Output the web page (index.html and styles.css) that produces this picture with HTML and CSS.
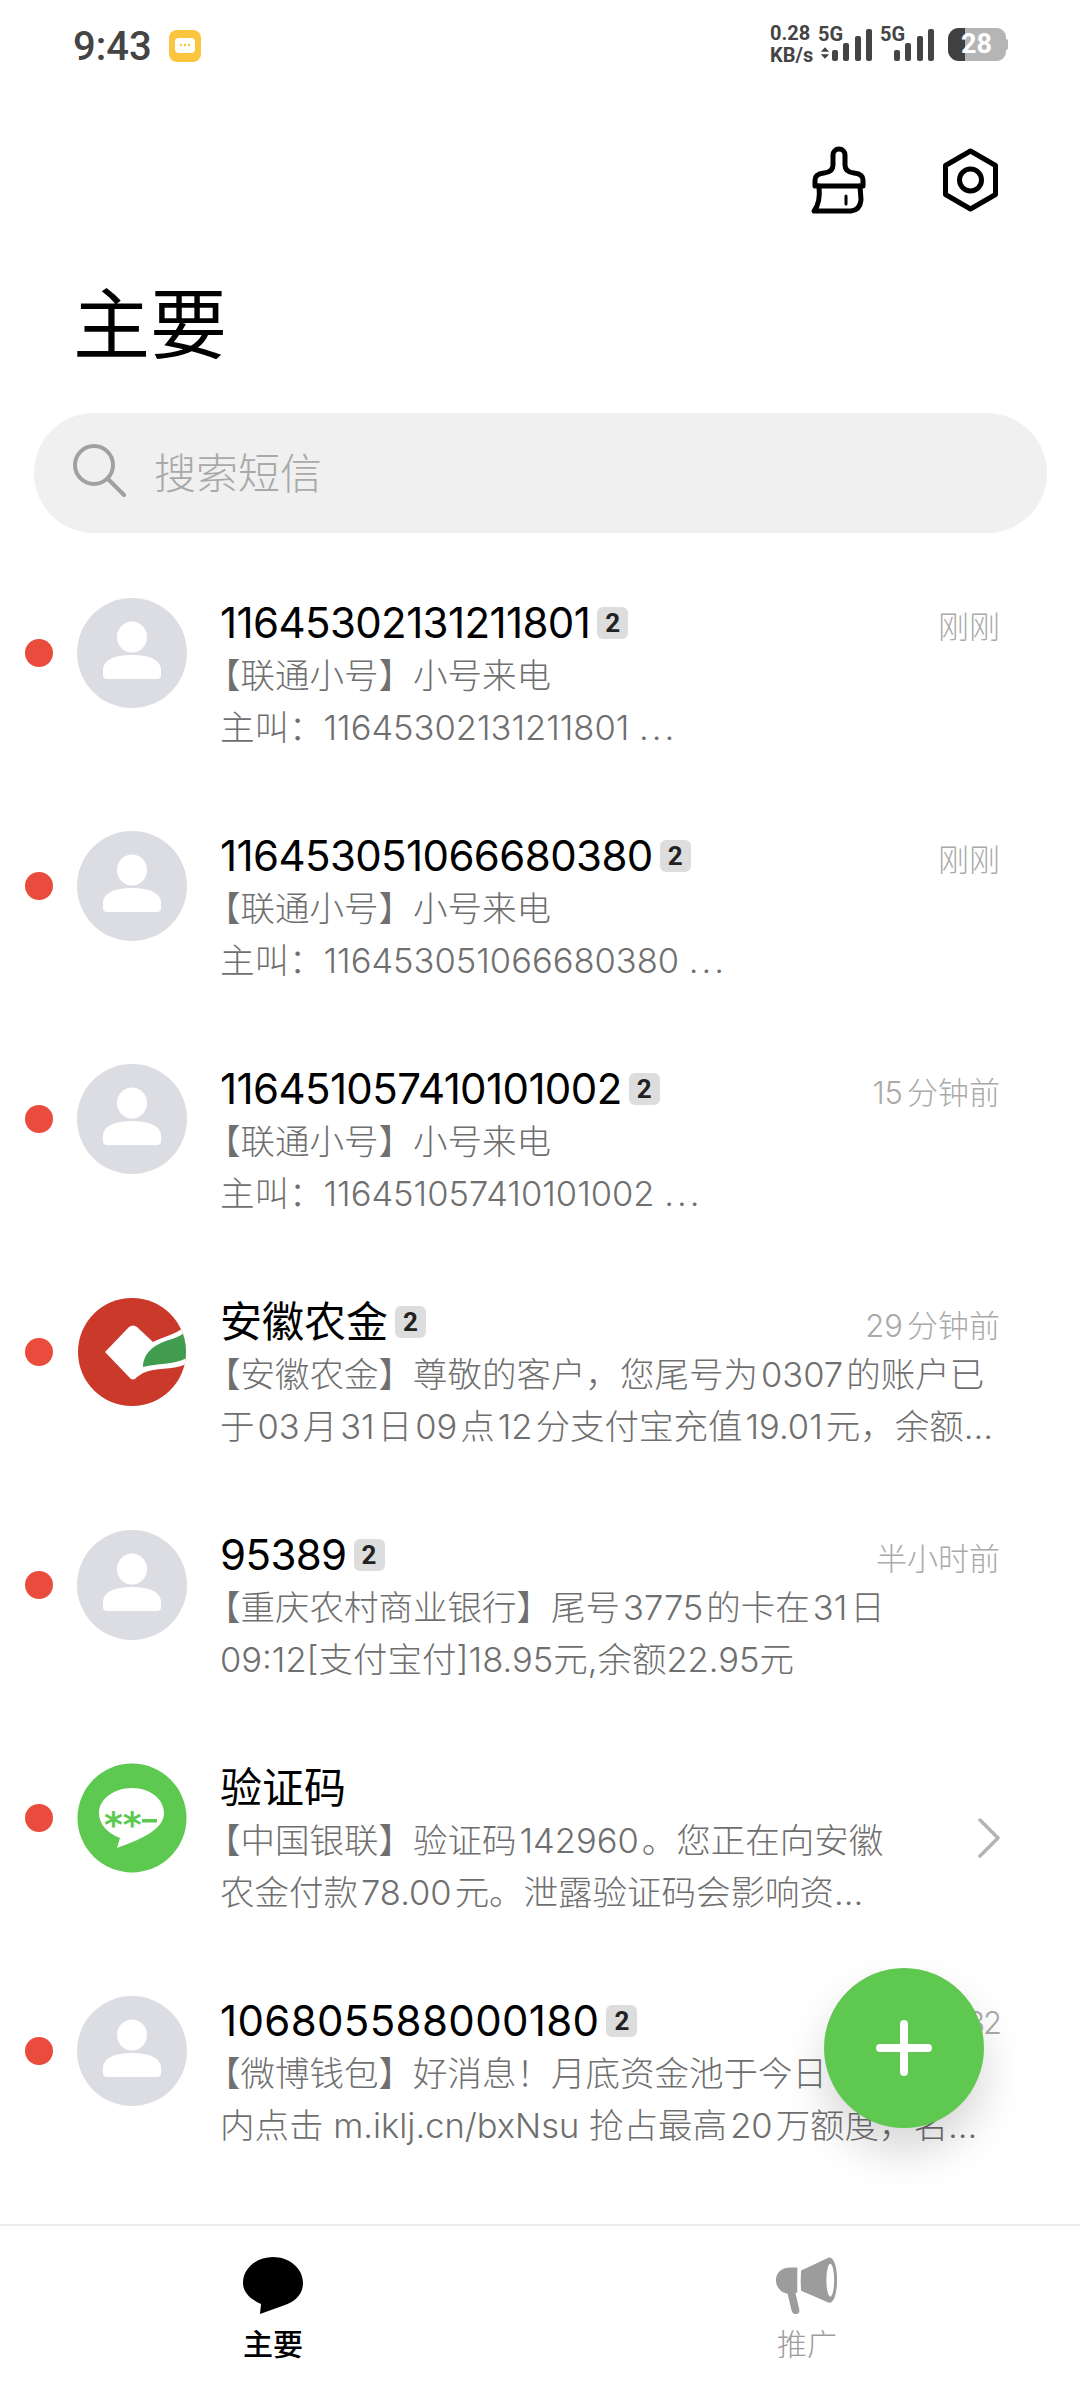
FILE: index.html
```html
<!DOCTYPE html>
<html lang="zh">
<head>
<meta charset="utf-8">
<title>主要</title>
<link rel="stylesheet" href="styles.css">
</head>
<body>
<div class="page">
  <div class="status">
    <span class="clock">9:43</span>
    <svg class="notif" viewBox="0 0 32 32"><rect width="32" height="32" rx="8" fill="#fbc53f"/><rect x="6" y="8" width="20" height="15" rx="4" fill="#fff"/><circle cx="12" cy="15" r="1.2" fill="#fbc53f"/><circle cx="16" cy="15" r="1.2" fill="#fbc53f"/><circle cx="20" cy="15" r="1.2" fill="#fbc53f"/></svg>
    <div class="status-right">
      <div class="speed"><span>0.28</span><span>KB/s</span></div>
      <div class="sim">
        <span class="sim-label">5G</span>
        <svg class="arrows" viewBox="0 0 12 14"><path d="M6 0l5 5.500H1zM6 14l5-5.500H1z" fill="#444"/></svg>
        <svg class="bars" viewBox="0 0 40 32"><rect x="0" y="21" width="6" height="11" rx="2"/><rect x="11" y="14" width="6" height="18" rx="2"/><rect x="23" y="7" width="6" height="25" rx="2"/><rect x="34" y="0" width="6" height="32" rx="2"/></svg>
      </div>
      <div class="sim sim-second">
        <span class="sim-label">5G</span>
        <svg class="bars" viewBox="0 0 40 32"><rect x="0" y="21" width="6" height="11" rx="2"/><rect x="11" y="14" width="6" height="18" rx="2"/><rect x="23" y="7" width="6" height="25" rx="2"/><rect x="34" y="0" width="6" height="32" rx="2"/></svg>
      </div>
      <div class="battery"><span class="battery-level"></span><span class="battery-text">28</span><span class="battery-cap"></span></div>
    </div>
  </div>

  <div class="actions">
    <svg class="action-icon" viewBox="810 146 58 68" fill="none" stroke="#000" stroke-width="5" stroke-linejoin="round" stroke-linecap="round"><path d="M815 186V180Q815 174 824 173Q833 172 833 165V155a6 6 0 0 1 12 0V165Q845 172 854 173Q863 174 863 180V186Z"/><path d="M819 186C820 196 819 205 814 211H851Q860 210 861 200L860 186"/><path d="M846 196V204" stroke-width="3"/></svg>
    <svg class="action-icon gear" viewBox="940 146 62 68" fill="none" stroke="#000" stroke-width="5" stroke-linejoin="round"><path d="M970.500 151L995.500 165.500V194.500L970.500 209L945.500 194.500V165.500Z"/><circle cx="970.500" cy="180" r="11"/></svg>
  </div>

  <h1 class="heading">主要</h1>

  <div class="search">
    <svg class="search-icon" viewBox="0 0 54 54" fill="none" stroke="#a0a0a0" stroke-width="4" stroke-linecap="round"><circle cx="22" cy="22" r="19"/><path d="M36 36L52 52"/></svg>
    <span class="search-text">搜索短信</span>
  </div>

  <div class="list">
    <div class="row">
      <span class="dot"></span>
      <svg class="avatar" viewBox="0 0 110 110"><circle cx="55" cy="55" r="55" fill="#dcdde2"/><ellipse cx="55" cy="39" rx="15" ry="15.500" fill="#fff"/><path d="M26 77V72C26 62 38 57 55 57S84 62 84 72V77a4 4 0 0 1-4 4H30a4 4 0 0 1-4-4Z" fill="#fff"/></svg>
      <div class="body">
        <div class="head"><span class="name tight">11645302131211801</span><span class="badge">2</span><span class="time">刚刚</span></div>
        <div class="line"><span class="br">【</span>联通小号】小号来电</div>
        <div class="line">主叫：11645302131211801 <span class="dots">...</span></div>
      </div>
    </div>

    <div class="row">
      <span class="dot"></span>
      <svg class="avatar" viewBox="0 0 110 110"><circle cx="55" cy="55" r="55" fill="#dcdde2"/><ellipse cx="55" cy="39" rx="15" ry="15.500" fill="#fff"/><path d="M26 77V72C26 62 38 57 55 57S84 62 84 72V77a4 4 0 0 1-4 4H30a4 4 0 0 1-4-4Z" fill="#fff"/></svg>
      <div class="body">
        <div class="head"><span class="name tight">116453051066680380</span><span class="badge">2</span><span class="time">刚刚</span></div>
        <div class="line"><span class="br">【</span>联通小号】小号来电</div>
        <div class="line">主叫：116453051066680380 <span class="dots">...</span></div>
      </div>
    </div>

    <div class="row">
      <span class="dot"></span>
      <svg class="avatar" viewBox="0 0 110 110"><circle cx="55" cy="55" r="55" fill="#dcdde2"/><ellipse cx="55" cy="39" rx="15" ry="15.500" fill="#fff"/><path d="M26 77V72C26 62 38 57 55 57S84 62 84 72V77a4 4 0 0 1-4 4H30a4 4 0 0 1-4-4Z" fill="#fff"/></svg>
      <div class="body">
        <div class="head"><span class="name tight">116451057410101002</span><span class="badge">2</span><span class="time"><span class="time-num">15</span>分钟前</span></div>
        <div class="line"><span class="br">【</span>联通小号】小号来电</div>
        <div class="line">主叫：116451057410101002 <span class="dots">...</span></div>
      </div>
    </div>

    <div class="row">
      <span class="dot"></span>
      <svg class="avatar" viewBox="0 0 110 110"><defs><clipPath id="bank"><circle cx="55" cy="55" r="54"/></clipPath></defs><circle cx="55" cy="55" r="54" fill="#cb392b"/><g clip-path="url(#bank)"><path d="M28 55L52 30Q56 27 60 30L76 45C86 40 98 38 112 27V66C96 74 80 70 66 76L60 80Q56 85 52 80Z" fill="#fff"/><path d="M66 70C66 56 78 47 92 43C98 41 104 39 108 35L112 60C98 68 82 66 66 70Z" fill="#419c50"/></g></svg>
      <div class="body">
        <div class="head"><span class="name">安徽农金</span><span class="badge">2</span><span class="time"><span class="time-num">29</span>分钟前</span></div>
        <div class="line"><span class="br">【</span>安徽农金】尊敬的客户，您尾号为<span class="gap">0307</span>的账户已</div>
        <div class="line">于<span class="gap">03</span>月<span class="gap">31</span>日<span class="gap">09</span>点<span class="gap">12</span>分支付宝充值<span class="gap">19.01</span>元，余额...</div>
      </div>
    </div>

    <div class="row">
      <span class="dot"></span>
      <svg class="avatar" viewBox="0 0 110 110"><circle cx="55" cy="55" r="55" fill="#dcdde2"/><ellipse cx="55" cy="39" rx="15" ry="15.500" fill="#fff"/><path d="M26 77V72C26 62 38 57 55 57S84 62 84 72V77a4 4 0 0 1-4 4H30a4 4 0 0 1-4-4Z" fill="#fff"/></svg>
      <div class="body">
        <div class="head"><span class="name tight">95389</span><span class="badge">2</span><span class="time">半小时前</span></div>
        <div class="line"><span class="br">【</span>重庆农村商业银行】尾号<span class="gap">3775</span>的卡在<span class="gap">31</span>日</div>
        <div class="line">09:12[支付宝付]18.95元,余额22.95元</div>
      </div>
    </div>

    <div class="row">
      <span class="dot"></span>
      <svg class="avatar" viewBox="0 0 110 110"><circle cx="55" cy="55" r="54.500" fill="#5dc950"/><path d="M55 25C73 25 87 36 87 50C87 65 68 75 40 85L43 75C30 70 22 61 22 50C22 36 37 25 55 25Z" fill="#fff"/><text class="code-mark" x="27" y="74">**</text><rect x="65" y="56" width="15" height="3.500" fill="#5dc950"/></svg>
      <div class="body">
        <div class="head"><span class="name">验证码</span></div>
        <div class="line"><span class="br">【</span>中国银联】验证码<span class="gap">142960</span>。您正在向安徽</div>
        <div class="line">农金付款<span class="gap">78.00</span>元。泄露验证码会影响资...</div>
      </div>
      <svg class="chevron" viewBox="0 0 24 40" fill="none" stroke="#b4b4b4" stroke-width="3.500" stroke-linecap="round" stroke-linejoin="round"><path d="M3 2L21 20L3 38"/></svg>
    </div>

    <div class="row">
      <span class="dot"></span>
      <svg class="avatar" viewBox="0 0 110 110"><circle cx="55" cy="55" r="55" fill="#dcdde2"/><ellipse cx="55" cy="39" rx="15" ry="15.500" fill="#fff"/><path d="M26 77V72C26 62 38 57 55 57S84 62 84 72V77a4 4 0 0 1-4 4H30a4 4 0 0 1-4-4Z" fill="#fff"/></svg>
      <div class="body">
        <div class="head"><span class="name wide">106805588000180</span><span class="badge">2</span><span class="time time-clock">09:32</span></div>
        <div class="line"><span class="br">【</span>微博钱包】好消息！月底资金池于今日</div>
        <div class="line">内点击 m.iklj.cn/bxNsu 抢占最高<span class="gap">20</span>万额度，名...</div>
      </div>
    </div>
  </div>

  <div class="tabs">
    <div class="tab tab-active">
      <svg class="tab-icon" viewBox="0 0 64 60"><path d="M32 2C48 2 62 13 62 28C62 40 53 47 44 50L19 59L20 49C9 44 2 37 2 28C2 13 16 2 32 2Z" fill="#000"/></svg>
      <span class="tab-label">主要</span>
    </div>
    <div class="tab">
      <svg class="tab-icon" viewBox="0 0 66 60"><path d="M23 12H16C6 12 1 18 1 25S6 38 13 39L17 56Q18 60 22 60Q26 59 25 55L21 38H23Z" fill="#9c9c9c"/><path d="M27 15L55 2C60 0 64 10 64 25S60 50 55 48L27 36Q26 25 27 15Z" fill="#9c9c9c"/><ellipse cx="57" cy="25" rx="4" ry="17" fill="#fff"/></svg>
      <span class="tab-label">推广</span>
    </div>
  </div>

  <button class="fab" type="button" aria-label="新建"><svg viewBox="0 0 56 56" fill="none" stroke="#fff" stroke-width="8" stroke-linecap="round"><path d="M28 4V52M4 28H52"/></svg></button>
</div>
</body>
</html>
```
FILE: styles.css
```css
* { box-sizing: border-box; }
html, body { margin: 0; padding: 0; background: #fff; }
body { font-family: Inter, "Noto Sans CJK SC", sans-serif; }

.page {
  position: relative;
  width: 1080px;
  height: 2400px;
  overflow: hidden;
  display: flex;
  flex-direction: column;
  background: #fff;
}

/* status bar */
.status {
  height: 90px;
  flex: none;
  display: flex;
  align-items: center;
  padding: 2px 72px 0 73px;
  color: #444;
}
.clock { font-family: Roboto, sans-serif; font-size: 40px; font-weight: 500; }
.notif { width: 32px; height: 32px; margin-left: 17px; }
.status-right { margin-left: auto; margin-top: -4px; display: flex; align-items: flex-end; height: 34px; font-family: Roboto, sans-serif; }
.speed { align-self: flex-start; display: flex; flex-direction: column; font-size: 20px; font-weight: 700; line-height: 22px; width: 48px; margin-top: -5px; }
.sim { position: relative; display: flex; align-items: flex-end; height: 32px; width: 54px; justify-content: flex-end; }
.sim-second { margin-left: 8px; }
.sim-label { position: absolute; left: 0; top: -6px; font-size: 20px; line-height: 22px; font-weight: 700; }
.arrows { position: absolute; left: 2px; bottom: 1px; width: 10px; height: 14px; }
.bars { width: 40px; height: 32px; fill: #444; }
.battery { position: relative; width: 58px; height: 33px; margin-left: 14px; margin-right: 2px; background: #b5b5b5; border-radius: 11px 9px 9px 11px; }
.battery-level { position: absolute; left: 0; top: 0; bottom: 0; width: 17px; background: #404040; border-radius: 11px 0 0 11px; }
.battery-text { position: absolute; left: 13px; top: 0; font-size: 27px; line-height: 33px; font-weight: 700; color: #fff; }
.battery-cap { position: absolute; right: -2px; top: 11px; width: 2px; height: 11px; background: #b5b5b5; border-radius: 0 2px 2px 0; }

/* header */
.actions { flex: none; height: 145px; display: flex; justify-content: flex-end; align-items: flex-start; padding: 56px 78px 0 0; gap: 72px; }
.action-icon { width: 58px; height: 68px; }
.gear { width: 62px; }
.heading { margin: 0 0 0 73px; height: 178px; padding-top: 35px; font-size: 77px; font-weight: 400; line-height: 110px; color: #000; }

/* search */
.search { flex: none; margin: 0 33px 0 34px; height: 120px; border-radius: 60px; background: #f0f0f0; display: flex; align-items: center; padding-left: 38px; }
.search-icon { width: 54px; height: 54px; margin-top: -6px; }
.search-text { margin-left: 28px; margin-top: -6px; font-size: 42px; color: #a9a9a9; font-weight: 300; }

/* list */
.list { flex: 1; min-height: 0; }
.row { height: 233px; padding: 65px 80px 0 25px; display: flex; align-items: flex-start; }
.dot { flex: none; width: 28px; height: 28px; margin-top: 41px; border-radius: 50%; background: #e94c3d; }
.avatar { flex: none; width: 110px; height: 110px; margin-left: 24px; }
.body { flex: 1; min-width: 0; margin-left: 33px; margin-top: -2px; }
.head { display: flex; align-items: center; height: 54px; }
.name { font-size: 42px; line-height: 54px; color: #000; }
.tight { letter-spacing: -0.6px; }
.wide { letter-spacing: 0.35px; }
.badge { width: 31px; height: 32px; margin-left: 7px; border-radius: 6px; background: #dddddd; font-family: Roboto, sans-serif; font-size: 26px; font-weight: 700; line-height: 32px; text-align: center; color: #222; }
.time { margin-left: auto; margin-top: 2px; font-size: 31px; font-weight: 300; color: #aaaaaa; }
.time-num { margin-right: 4px; }
.time-clock { letter-spacing: -2px; }
.line { height: 52px; font-size: 34.5px; line-height: 52px; font-weight: 300; color: #6f6f6f; white-space: nowrap; }
.br { margin-left: -14px; }
.gap { margin: 0 3px; }
.dots { letter-spacing: 3px; }
.code-mark { font-family: "DejaVu Sans", sans-serif; font-size: 36px; font-weight: 700; fill: #5dc950; }
.chevron { flex: none; width: 24px; height: 40px; margin: 55px -1px 0 -23px; }

/* tabs */
.tabs { flex: none; height: 176px; padding: 0 6px; border-top: 2px solid #ececec; display: grid; grid-template-columns: 1fr 1fr; }
.tab { display: flex; flex-direction: column; align-items: center; padding-top: 29px; color: #9c9c9c; }
.tab-active { color: #000; }
.tab-icon { width: 64px; height: 60px; }
.tab-label { margin-top: 8px; font-size: 30px; line-height: 42px; font-weight: 300; }
.tab-active .tab-label { font-weight: 500; }

/* floating action */
.fab { position: absolute; left: 824px; top: 1968px; width: 160px; height: 160px; padding: 52px; border: 0; border-radius: 50%; background: #5ec850; box-shadow: 0 24px 44px rgba(0,0,0,.16); }
.fab svg { display: block; width: 56px; height: 56px; }
```
